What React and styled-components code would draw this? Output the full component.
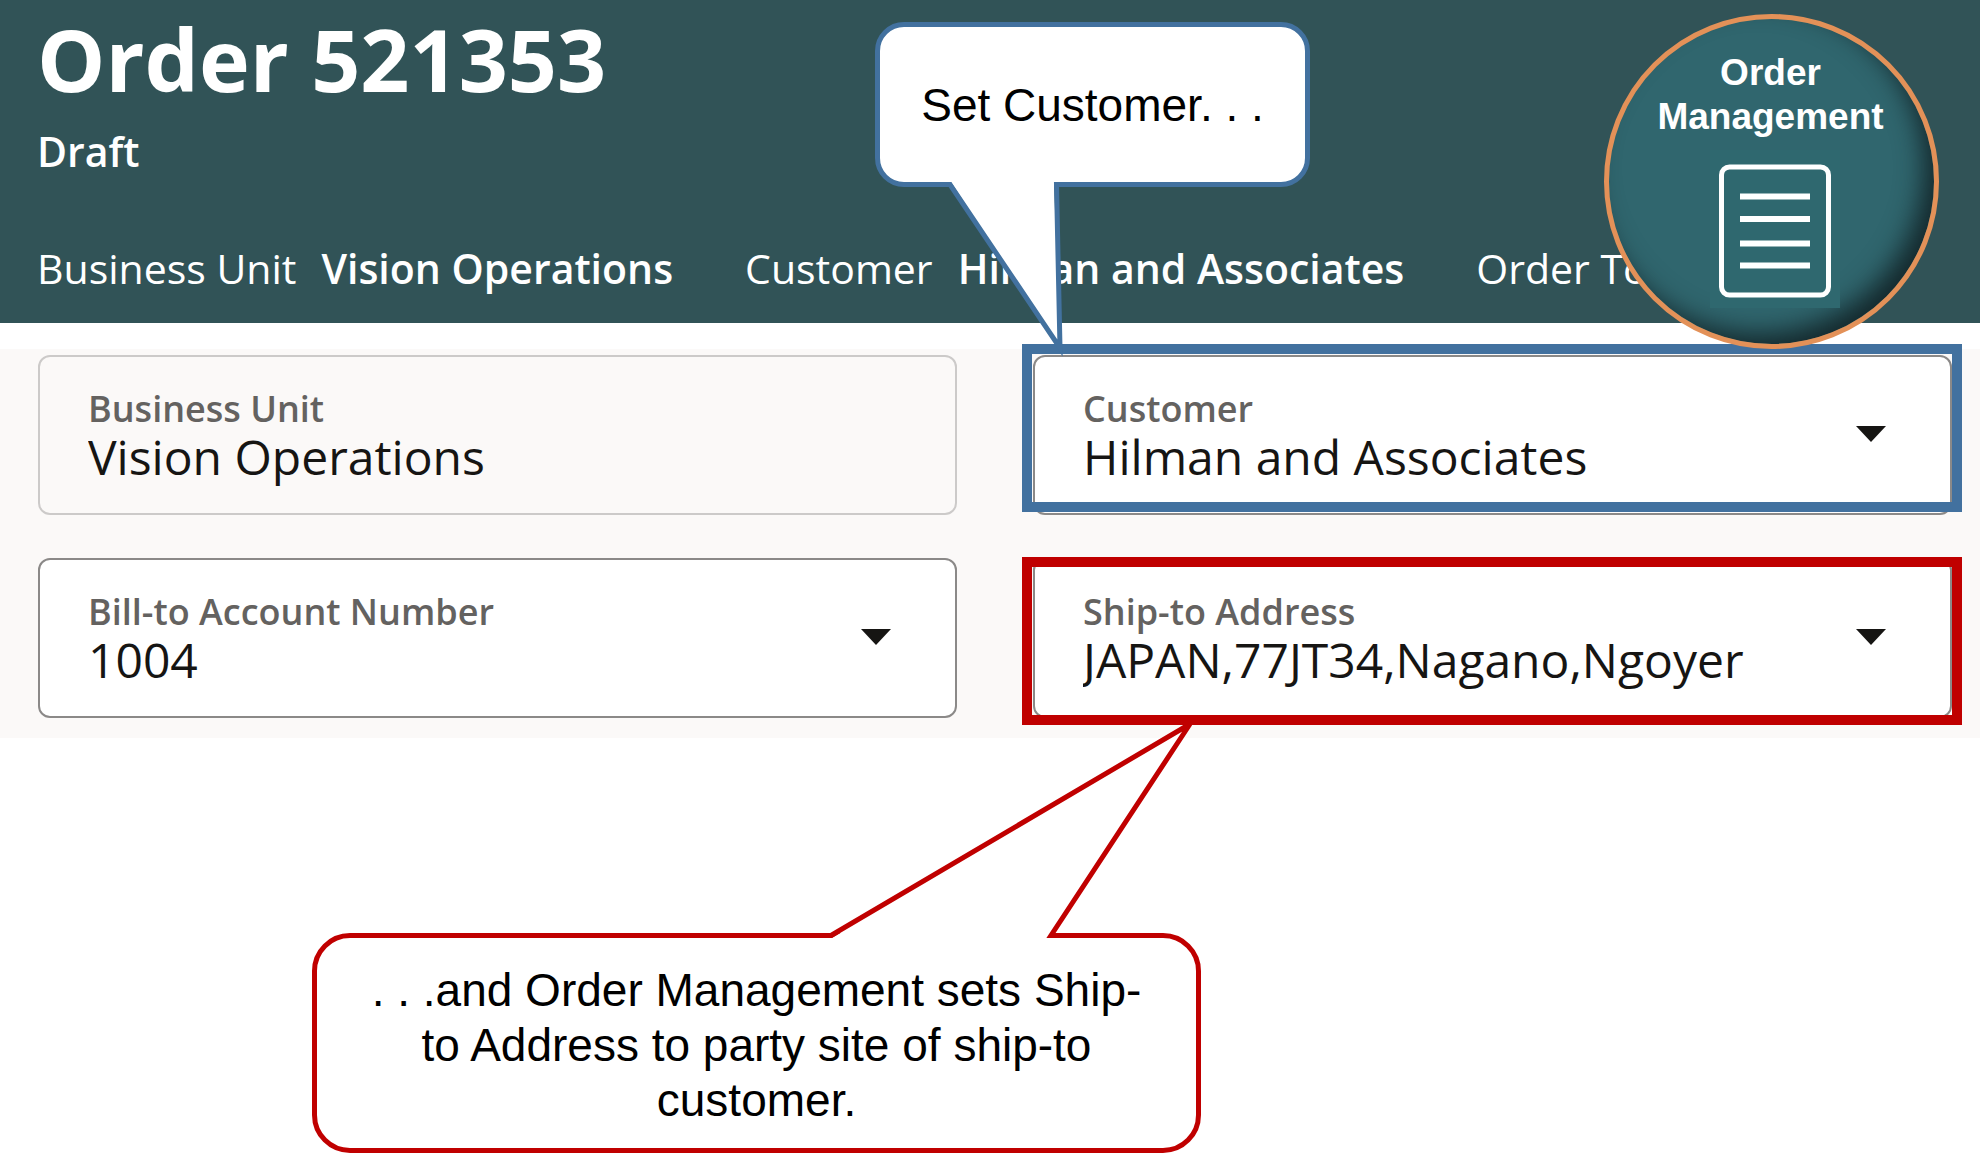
import styled, { createGlobalStyle } from "styled-components";

const BLUE = "#42719f";
const RED = "#c00000";

const App = () => {
    return (
        <>
            <GlobalStyle />
            <Page>
                <Header>
                    <Title>Order 521353</Title>
                    <Status>Draft</Status>
                    <Facts>
                        <Fact>
                            <dt>Business Unit</dt>
                            <dd>Vision Operations</dd>
                        </Fact>
                        <Fact>
                            <dt>Customer</dt>
                            <dd>Hilman and Associates</dd>
                        </Fact>
                        <Fact>
                            <dt>Order Total</dt>
                        </Fact>
                    </Facts>
                    <Badge>
                        <BadgeText>Order Management</BadgeText>
                        <DocumentIcon />
                    </Badge>
                </Header>
                <Panel>
                    <Field className="readonly">
                        <Label htmlFor="business-unit">Business Unit</Label>
                        <Input id="business-unit" defaultValue="Vision Operations" readOnly />
                    </Field>
                    <Field>
                        <SelectField id="customer" label="Customer" value="Hilman and Associates" />
                        <Highlight $color={BLUE} $inset="-13px -12px 1px -13px" />
                        <CustomerCallout>
                            <Tail viewBox="0 0 435 165" aria-hidden="true">
                                <path fill="#fff" d="M76 160 L185 328 L179 160 Z" />
                                <path fill="none" stroke={BLUE} strokeWidth="5" d="M66 162.5 H75 L185 326 L181.5 162.5 H195" />
                            </Tail>
                            Set Customer. . .
                        </CustomerCallout>
                    </Field>
                    <Field>
                        <SelectField id="bill-to" label="Bill-to Account Number" value="1004" />
                    </Field>
                    <Field>
                        <SelectField id="ship-to" label="Ship-to Address" value="JAPAN,77JT34,Nagano,Ngoyer" />
                        <Highlight $color={RED} $inset="-3px -12px -9px -13px" />
                    </Field>
                </Panel>
                <Notes>
                    <AddressCallout>
                        <Tail viewBox="0 0 889 220" aria-hidden="true">
                            <path fill="#fff" d="M520 5 L878 -206 L739 5 Z" />
                            <path fill="none" stroke={RED} strokeWidth="5" d="M500 2.5 H519 L878 -209 L739 2.5 H760" />
                        </Tail>
                        . . .and Order Management sets Ship-to Address to party site of ship-to customer.
                    </AddressCallout>
                </Notes>
            </Page>
        </>
    );
}

const SelectField = ({ id, label, value }) => (
    <>
        <Label htmlFor={id}>{label}</Label>
        <Select id={id} defaultValue={value}>
            <option value={value}>{value}</option>
        </Select>
        <Caret viewBox="0 0 30 16" aria-hidden="true">
            <path fill="#161513" d="M0 0 H30 L15 16 Z" />
        </Caret>
    </>
);

const DocumentIcon = () => (
    <Icon viewBox="0 0 130 158" aria-hidden="true">
        <rect width="130" height="158" fill="#2f686f" />
        <rect x="11.5" y="17" width="107" height="128" rx="8" fill="none" stroke="#fff" strokeWidth="5" />
        <path stroke="#fff" strokeWidth="6" d="M30 46.5 H100 M30 69 H100 M30 93.5 H100 M30 115.5 H100" />
    </Icon>
);

const GlobalStyle = createGlobalStyle`
  * {
    box-sizing: border-box;
  }
  body {
    margin: 0;
    background: #fff;
    font-family: "Open Sans", "Noto Sans", sans-serif;
  }
`;

const Page = styled.main`
  overflow-x: hidden;
`;

const Header = styled.header`
  position: relative;
  padding: 9px 37px 27px;
  background: #315357;
  color: #fff;
`;

const Title = styled.h1`
  margin: 0;
  font-size: 86px;
  font-weight: 700;
  line-height: 100px;
`;

const Status = styled.p`
  margin: 14px 0 61px;
  font-size: 41px;
  font-weight: 600;
  line-height: 56px;
`;

const Facts = styled.dl`
  display: flex;
  gap: 72px;
  margin: 0;
  font-size: 41px;
  line-height: 56px;
  white-space: nowrap;
`;

const Fact = styled.div`
  display: flex;
  gap: 25px;
  dd {
    margin: 0;
    font-weight: 600;
  }
`;

const Badge = styled.div`
  position: absolute;
  z-index: 3;
  top: 14px;
  right: 41px;
  display: flex;
  flex-direction: column;
  align-items: center;
  width: 335px;
  height: 335px;
  padding: 32px 2px 0 0;
  border: 5px solid #e39158;
  border-radius: 50%;
  background: #30666e;
  box-shadow: inset -14px -14px 26px -4px #14282c;
`;

const BadgeText = styled.div`
  width: 240px;
  font-family: "Liberation Sans", Arial, sans-serif;
  font-size: 37px;
  font-weight: 700;
  line-height: 44px;
  text-align: center;
`;

const Icon = styled.svg`
  width: 130px;
  height: 158px;
  margin: 11px 0 0 8px;
`;

const Panel = styled.section`
  display: grid;
  grid-template-columns: 1fr 1fr;
  gap: 43px 76px;
  margin-top: 26px;
  padding: 6px 28px 20px 38px;
  background: #fbf9f8;
`;

const Field = styled.div`
  position: relative;
  display: grid;
  grid-template-columns: 1fr auto;
  align-items: center;
  padding: 24px 64px 26px 48px;
  border: 2px solid #8b8988;
  border-radius: 12px;
  background: #fff;
  &.readonly {
    border-color: #cccac9;
    background: #fbf9f8;
  }
`;

const Label = styled.label`
  grid-column: 1;
  padding-top: 10px;
  color: #646260;
  font-size: 36px;
  font-weight: 600;
  line-height: 36px;
`;

const Input = styled.input`
  grid-column: 1;
  width: 100%;
  height: 60px;
  padding: 0;
  border: 0;
  outline: 0;
  background: transparent;
  color: #161513;
  font-family: inherit;
  font-size: 48px;
  line-height: 60px;
`;

const Select = styled(Input).attrs({ as: "select" })`
  appearance: none;
  cursor: pointer;
`;

const Caret = styled.svg`
  grid-column: 2;
  grid-row: 1 / 3;
  width: 30px;
  height: 16px;
  pointer-events: none;
`;

const Highlight = styled.div`
  position: absolute;
  inset: ${(props) => props.$inset};
  border: 10px solid ${(props) => props.$color};
  pointer-events: none;
`;

const Callout = styled.div`
  position: relative;
  display: flex;
  align-items: center;
  justify-content: center;
  border: 5px solid ${(props) => props.$color};
  background: #fff;
  color: #000;
  font-family: "Liberation Sans", Arial, sans-serif;
  font-size: 46px;
  line-height: 55px;
  text-align: center;
`;

const CustomerCallout = styled(Callout).attrs({ $color: BLUE })`
  position: absolute;
  z-index: 2;
  bottom: 326px;
  left: -160px;
  width: 435px;
  height: 165px;
  padding-top: 2px;
  border-radius: 29px;
`;

const AddressCallout = styled(Callout).attrs({ $color: RED })`
  width: 889px;
  padding: 25px 50px 20px;
  border-radius: 38px;
`;

const Tail = styled.svg`
  position: absolute;
  top: -5px;
  left: -5px;
  width: calc(100% + 10px);
  overflow: visible;
  pointer-events: none;
`;

const Notes = styled.section`
  padding: 195px 0 0 312px;
`;

export default App;
